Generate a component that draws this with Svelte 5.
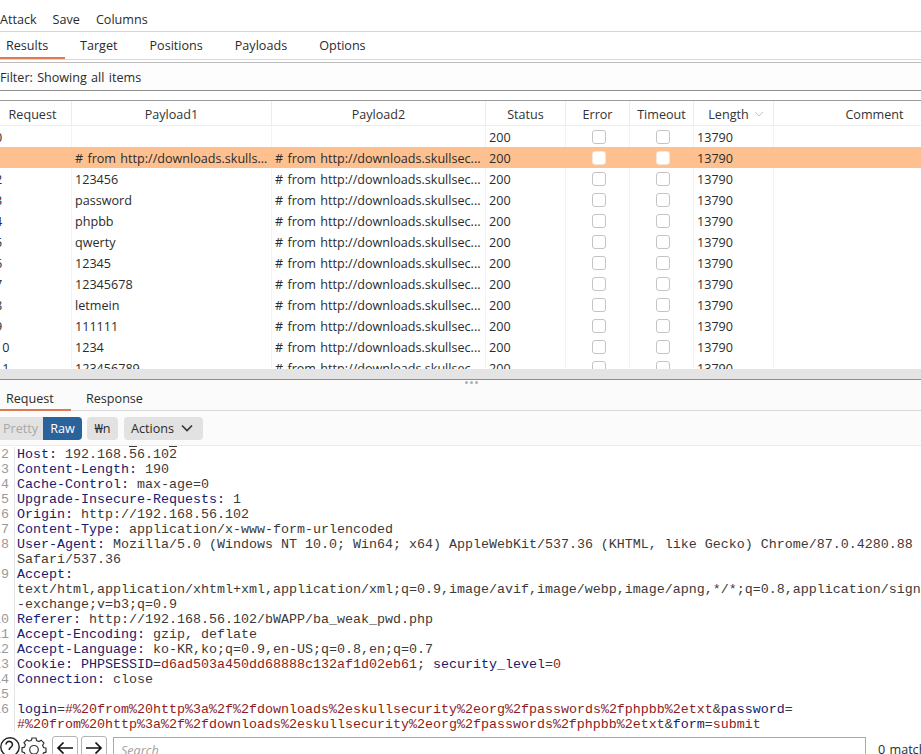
<script>
  const p2 = '# from http://downloads.skullsec...';
  const rows = [
    ['0', ''],
    ['1', '# from http://downloads.skulls...'],
    ['2', '123456'],
    ['3', 'password'],
    ['4', 'phpbb'],
    ['5', 'qwerty'],
    ['6', '12345'],
    ['7', '12345678'],
    ['8', 'letmein'],
    ['9', '111111'],
    ['10', '1234'],
    ['11', '123456789']
  ];
  const q = '#%20from%20http%3a%2f%2fdownloads%2eskullsecurity%2eorg%2fpasswords%2fphpbb%2etxt';
  const headers = [
    ['3', 'Content-Length', '190'],
    ['4', 'Cache-Control', 'max-age=0'],
    ['5', 'Upgrade-Insecure-Requests', '1'],
    ['6', 'Origin', 'http://192.168.56.102'],
    ['7', 'Content-Type', 'application/x-www-form-urlencoded'],
    ['8', 'User-Agent', 'Mozilla/5.0 (Windows NT 10.0; Win64; x64) AppleWebKit/537.36 (KHTML, like Gecko) Chrome/87.0.4280.88']
  ];
</script>

<div class="page">
  <nav class="menu">
    <span>Attack</span><span>Save</span><span>Columns</span>
  </nav>

  <div class="tabs top">
    <span class="tab first active">Results</span>
    <span class="tab">Target</span>
    <span class="tab">Positions</span>
    <span class="tab">Payloads</span>
    <span class="tab">Options</span>
  </div>

  <div class="filter">Filter: Showing all items</div>

  <section class="results">
    <div class="row head">
      <div class="h req">Request</div>
      <div class="h">Payload1</div>
      <div class="h">Payload2</div>
      <div class="h">Status</div>
      <div class="h">Error</div>
      <div class="h">Timeout</div>
      <div class="h len">Length
        <svg class="sort" width="10" height="6" viewBox="0 0 10 6"><path d="M1 1l4 4 4-4" fill="none" stroke="#c4c4c4" stroke-width="1" /></svg>
      </div>
      <div class="h">Comment</div>
    </div>
    {#each rows as r, i}
      <div class="row body" class:selected={i === 1}>
        <div class="c num"><span>{r[0]}</span></div>
        <div class="c">{r[1]}</div>
        <div class="c">{i === 0 ? '' : p2}</div>
        <div class="c">200</div>
        <div class="c box"><i></i></div>
        <div class="c box"><i></i></div>
        <div class="c">13790</div>
        <div class="c"></div>
      </div>
    {/each}
  </section>

  <div class="sash"></div>
  <div class="dots"><b></b><b></b><b></b></div>

  <div class="tabs lower">
    <span class="tab first active">Request</span>
    <span class="tab">Response</span>
  </div>

  <div class="toolbar">
    <div class="seg"><span class="pretty">Pretty</span><span class="raw">Raw</span></div>
    <span class="btn wn">₩n</span>
    <span class="btn actions">Actions
      <svg width="12" height="8" viewBox="0 0 12 8"><path d="M1 1.5l5 5 5-5" fill="none" stroke="#333" stroke-width="1.6" /></svg>
    </span>
  </div>

  <div class="editor">
    <div class="ln"><em>2</em><code><span class="k">Host:</span> 192.168.<span class="over">5</span>6.10<span class="over">2</span></code></div>
    {#each headers as h}
      <div class="ln"><em>{h[0]}</em><code><span class="k">{h[1]}:</span> {h[2]}</code></div>
    {/each}
    <div class="ln"><em></em><code>Safari/537.36</code></div>
    <div class="ln"><em>9</em><code><span class="k">Accept:</span></code></div>
    <div class="ln"><em></em><code>text/html,application/xhtml+xml,application/xml;q=0.9,image/avif,image/webp,image/apng,*/*;q=0.8,application/signed</code></div>
    <div class="ln"><em></em><code>-exchange;v=b3;q=0.9</code></div>
    <div class="ln"><em>10</em><code><span class="k">Referer:</span> http://192.168.56.102/bWAPP/ba_weak_pwd.php</code></div>
    <div class="ln"><em>11</em><code><span class="k">Accept-Encoding:</span> gzip, deflate</code></div>
    <div class="ln"><em>12</em><code><span class="k">Accept-Language:</span> ko-KR,ko;q=0.9,en-US;q=0.8,en;q=0.7</code></div>
    <div class="ln"><em>13</em><code><span class="k">Cookie:</span> <span class="k">PHPSESSID</span>=<span class="v">d6ad503a450dd68888c132af1d02eb61</span>; <span class="k">security_level</span>=<span class="v">0</span></code></div>
    <div class="ln"><em>14</em><code><span class="k">Connection:</span> close</code></div>
    <div class="ln"><em>15</em><code></code></div>
    <div class="ln"><em>16</em><code><span class="k">login</span>=<span class="v">{q}</span>&amp;<span class="k">password</span>=</code></div>
    <div class="ln"><em></em><code><span class="v">{q}</span>&amp;<span class="k">form</span>=<span class="v">submit</span></code></div>
  </div>

  <footer class="bottom">
    <svg class="help" width="20" height="20" viewBox="0 0 20 20"><circle cx="10" cy="10" r="9.2" fill="none" stroke="#222" stroke-width="1.4" /><path d="M6 7.500a3.200 3.200 0 1 1 5 2.700c-1.200.8-1.800 1.400-1.800 2.800" fill="none" stroke="#222" stroke-width="1.600" /></svg>
    <svg class="gear" width="26" height="20" viewBox="0 0 26 20"><path d="M11 1h4l.6 2.600 2.300 1 2.300-1.400 2.800 2.800-1.400 2.300 1 2.300 2.400.6v4l-2.400.6-1 2.300 1.400 2.300-2.800 2.800-2.300-1.400-2.300 1-.6 2.600h-4l-.6-2.600-2.300-1-2.300 1.400-2.800-2.800 1.400-2.300-1-2.300L1 14.800v-4l2.400-.6 1-2.300L3 5.600l2.800-2.800 2.300 1.400 2.300-1z" fill="none" stroke="#333" stroke-width="1.200" /><circle cx="13" cy="12.800" r="4.300" fill="none" stroke="#333" stroke-width="1.200" /></svg>
    <span class="nav"><svg width="20" height="14" viewBox="0 0 20 14"><path d="M18 7H3M8.500 1.500L3 7l5.500 5.500" fill="none" stroke="#111" stroke-width="1.700" /></svg></span>
    <span class="nav"><svg width="20" height="14" viewBox="0 0 20 14"><path d="M2 7h15M11.500 1.500L17 7l-5.500 5.500" fill="none" stroke="#111" stroke-width="1.700" /></svg></span>
    <div class="search">Search</div>
    <span class="matches">0 matches</span>
  </footer>
</div>

<style>
  :global(body) {
    margin: 0;
    background: #fff;
  }
  .page {
    position: relative;
    width: 921px;
    height: 754px;
    overflow: hidden;
    background: #fff;
    color: #2b2b2b;
    font-family: "Open Sans", "Noto Sans", sans-serif;
    font-size: 12.6px;
    word-spacing: 1px;
  }
  .menu {
    display: flex;
    gap: 16px;
    height: 20px;
    padding-top: 11px;
    line-height: 17px;
    border-bottom: 1px solid #d4d4d4;
  }
  .tabs {
    display: flex;
    box-sizing: border-box;
    height: 28px;
    border-bottom: 1px solid #d8d8d8;
  }
  .tab {
    padding: 4px 16px 0;
    line-height: 20px;
  }
  .tab.first {
    padding-left: 6px;
    margin-right: -1px;
    box-sizing: border-box;
  }
  .top .first {
    width: 65px;
  }
  .lower .first {
    width: 71px;
  }
  .active {
    border-bottom: 2px solid #e0794f;
    height: 27px;
    box-sizing: border-box;
  }
  .filter {
    margin-top: 2px;
    height: 29px;
    box-sizing: border-box;
    line-height: 29px;
    border-top: 1px solid #bcbcbc;
    border-bottom: 1px solid #8f8f8f;
    background: #fdfdfd;
  }
  .results {
    margin-top: 9px;
    height: 269px;
    overflow: hidden;
    border-top: 1px solid #9a9a9a;
    box-sizing: border-box;
  }
  .row {
    display: grid;
    grid-template-columns: 72px 200px 214px 80px 64px 64px 80px 202px;
  }
  .head {
    height: 24px;
    border-bottom: 1px solid #eee;
  }
  .h {
    display: flex;
    align-items: center;
    justify-content: center;
    gap: 5px;
    padding-top: 2px;
    box-sizing: border-box;
    height: 24px;
    border-right: 1px solid #ececec;
    color: #333;
  }
  .h.req {
    padding-right: 6px;
  }
  .h.len {
    padding-left: 5px;
  }
  .sort {
    flex: none;
  }
  .body {
    height: 21px;
  }
  .selected {
    background: #ffc090;
  }
  .c {
    box-sizing: border-box;
    height: 21px;
    padding: 1px 0 0 3px;
    line-height: 21px;
    white-space: nowrap;
    overflow: hidden;
    border-right: 1px solid #f3f3f3;
  }
  .selected .c {
    border-right-color: transparent;
  }
  .num {
    padding-left: 0;
  }
  .num span {
    display: block;
    margin-left: -5px;
  }
  .box {
    display: flex;
    align-items: center;
    justify-content: center;
    padding: 0 0 0 3px;
  }
  .box i {
    display: block;
    width: 12px;
    height: 12px;
    border: 1px solid #c4c4c4;
    border-radius: 3px;
    background: #fff;
  }
  .selected .box i {
    border-color: #f0e6dc;
  }
  .sash {
    height: 11px;
    box-sizing: border-box;
    background: #e4e4e4;
    border-bottom: 1px solid #8c8c8c;
  }
  .dots {
    position: absolute;
    left: 465px;
    top: 381px;
    display: flex;
    gap: 2px;
  }
  .dots b {
    width: 3px;
    height: 3px;
    border-radius: 50%;
    background: #b0b0b0;
  }
  .lower {
    height: 31px;
    background: #fbfbfb;
  }
  .lower .tab {
    padding-top: 9px;
  }
  .lower .active {
    height: 31px;
  }
  .toolbar {
    display: flex;
    gap: 5px;
    align-items: center;
    height: 35px;
    box-sizing: border-box;
    border-bottom: 1px solid #ececec;
    background: #fbfbfb;
  }
  .seg {
    display: flex;
    height: 23px;
    border-radius: 0 4px 4px 0;
    overflow: hidden;
    background: #e2e2e2;
  }
  .seg span {
    line-height: 23px;
  }
  .pretty {
    width: 43px;
    padding-left: 3px;
    box-sizing: border-box;
    color: #a8a8a8;
  }
  .raw {
    width: 39px;
    text-align: center;
    background: #2a629c;
    color: #fff;
  }
  .btn {
    box-sizing: border-box;
    height: 23px;
    line-height: 23px;
    border-radius: 4px;
    background: #e2e2e2;
    color: #2b2b2b;
  }
  .wn {
    width: 31px;
    text-align: center;
  }
  .actions {
    display: inline-flex;
    align-items: center;
    gap: 7px;
    width: 79px;
    margin-left: 1px;
    padding-left: 7px;
  }
  .editor {
    height: 291px;
    box-sizing: border-box;
    overflow: hidden;
    font-family: "Liberation Mono", monospace;
    font-size: 13.33px;
    word-spacing: 0;
    line-height: 15px;
    padding-top: 1px;
  }
  .ln {
    display: flex;
    height: 15px;
  }
  .ln em {
    flex: none;
    display: flex;
    justify-content: flex-end;
    box-sizing: border-box;
    width: 15px;
    padding-right: 5px;
    font-style: normal;
    color: #9a9a9a;
    border-right: 1px solid #e4e4e4;
  }
  .ln code {
    font: inherit;
    padding-left: 2px;
    white-space: pre;
    color: #3a3a3a;
  }
  .k {
    color: #14206e;
  }
  .v {
    color: #8c1c1c;
  }
  .over {
    text-decoration: overline;
  }
  .bottom {
    display: flex;
    align-items: flex-start;
    height: 17px;
  }
  .help {
    flex: none;
  }
  .gear {
    flex: none;
    margin: 0 5px 0 1px;
  }
  .nav {
    flex: none;
    box-sizing: border-box;
    width: 26px;
    height: 30px;
    margin: -1px 3px 0 0;
    border: 1px solid #b4b4b4;
    border-radius: 3px;
    padding: 4px 2px;
  }
  .nav svg {
    display: block;
  }
  .search {
    flex: none;
    box-sizing: border-box;
    width: 753px;
    height: 30px;
    margin-left: 3px;
    border: 1px solid #aaa;
    padding: 3px 7px;
    line-height: 20px;
    font-style: italic;
    color: #a0a0a0;
  }
  .matches {
    flex: none;
    margin-left: 12px;
    padding-top: 3px;
    white-space: nowrap;
    line-height: 20px;
  }
</style>
